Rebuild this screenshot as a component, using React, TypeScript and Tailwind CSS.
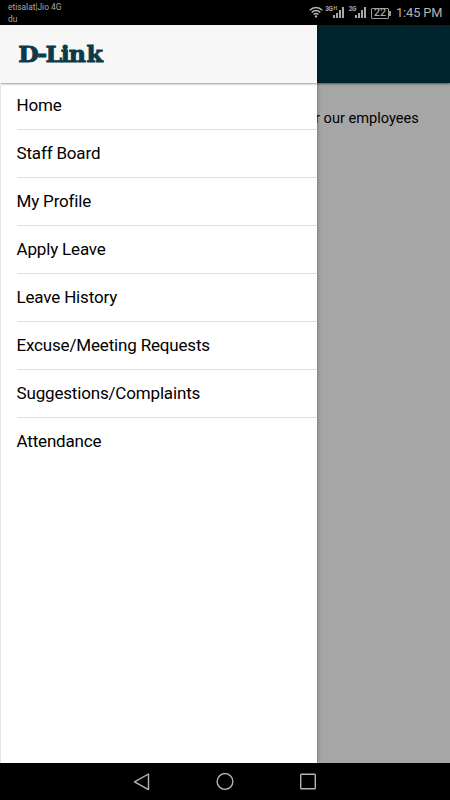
type MenuItem = {
  label: string;
  url: string;
};

const menuItems: MenuItem[] = [
  { label: "Home", url: "#" },
  { label: "Staff Board", url: "#" },
  { label: "My Profile", url: "#" },
  { label: "Apply Leave", url: "#" },
  { label: "Leave History", url: "#" },
  { label: "Excuse/Meeting Requests", url: "#" },
  { label: "Suggestions/Complaints", url: "#" },
  { label: "Attendance", url: "#" },
];

const WifiIcon = () => (
  <svg width="14" height="12" viewBox="0 0 14 12" fill="none" stroke="#b4b4b4" strokeWidth="1.4">
    <path d="M0.7 4.2C4.4 0.5 9.6 0.5 13.3 4.2" />
    <path d="M2.7 6.4C5.2 3.9 8.8 3.9 11.3 6.4" />
    <path d="M4.6 8.5C6 7.1 8 7.1 9.4 8.5" />
    <circle cx="7" cy="10.4" r="1.2" fill="#b4b4b4" stroke="none" />
  </svg>
);

const SignalIcon = ({ network, mode }: { network: string; mode?: string }) => (
  <div className="flex items-start">
    <span className="whitespace-nowrap text-[6.5px] font-bold leading-[6px] tracking-[-0.5px]">
      {network}
    </span>
    {mode && (
      <span className="ml-px text-[5px] font-bold leading-[5px]">{mode}</span>
    )}
    <svg
      className={mode ? "-ml-[4px] mt-px" : "-ml-px mt-px"}
      width="12"
      height="11"
      viewBox="0 0 12 11"
      fill="#a8a8a8"
    >
      <rect x="0" y="8" width="2" height="3" />
      <rect x="3" y="6" width="2" height="5" />
      <rect x="6" y="3" width="2" height="8" />
      <rect x="9" y="0" width="2" height="11" />
    </svg>
  </div>
);

const StatusBar = () => (
  <div className="flex h-[25px] shrink-0 justify-between bg-black pl-2 pr-[8px] text-[#a8a8a8]">
    <div className="pt-px text-[8.4px] leading-[12px]">
      <p>etisalat|Jio 4G</p>
      <p>du</p>
    </div>
    <div className="flex items-start">
      <div className="mr-[3px] mt-[6px]">
        <WifiIcon />
      </div>
      <div className="mr-[3px] mt-[6px] flex w-[19px] justify-end">
        <SignalIcon network="3G" mode="H" />
      </div>
      <div className="mr-[4px] mt-[6px] flex w-[19px] justify-end">
        <SignalIcon network="2G" />
      </div>
      <div className="mr-[5px] mt-[8px] flex items-center">
        <div className="flex h-[11px] w-[18px] items-center justify-center rounded-[1px] border border-[#9a9a9a] text-[10.5px] font-medium leading-none">
          22
        </div>
        <div className="h-[5px] w-[2px] bg-[#9a9a9a]" />
      </div>
      <span className="w-[46px] whitespace-nowrap text-[12.8px] leading-[26px] tracking-[-0.1px] text-[#b4b4b4]">
        1:45 PM
      </span>
    </div>
  </div>
);

const Logo = () => (
  <svg width="94" height="32" viewBox="0 0 94 32" aria-label="D-Link">
    <text
      x="0.2 18.8 26.6 41.4 49.2 66.6"
      y="24"
      transform="scale(1.03 1)"
      fill="#0c3a49"
      stroke="#0c3a49"
      strokeWidth="0.9"
      className="font-['DejaVu_Serif',serif] text-[23px] font-bold"
    >
      D-Link
    </text>
  </svg>
);

const Drawer = () => (
  <aside className="z-10 flex w-[317px] shrink-0 flex-col bg-white shadow-[0_0_4px_rgba(0,0,0,0.4)]">
    <header className="flex h-[58px] shrink-0 items-center bg-[#f7f7f7] pl-[18px] shadow-[0_1px_2px_rgba(0,0,0,0.4)]">
      <Logo />
    </header>
    <nav className="flex-1 border-l border-[#e4e4e4] pl-[15.5px]">
      {menuItems.map((item) => (
        <a
          key={item.label}
          href={item.url}
          className="flex h-12 items-center border-b border-[#dedede] pt-px text-[17px] tracking-[-0.17px] text-black first:h-[47px] first:pt-0 last:border-b-0 last:pt-0 last:pb-px"
        >
          {item.label}
        </a>
      ))}
    </nav>
  </aside>
);

const Page = () => (
  <main className="flex flex-1 flex-col bg-[#a6a6a6]">
    <div className="h-[58px] shrink-0 bg-[#00252e] shadow-[0_1px_2px_rgba(0,0,0,0.5)]" />
    <p className="-ml-[2px] mt-[25px] whitespace-nowrap text-[14.6px] leading-5 text-black">
      r our employees
    </p>
  </main>
);

const NavigationBar = () => (
  <div className="z-20 flex h-[37px] shrink-0 items-center justify-center gap-[65px] bg-black">
    <svg width="18" height="18" viewBox="0 0 18 18" fill="none" stroke="#b4b4b4" strokeWidth="1.4" strokeLinejoin="round">
      <path d="M1.5 8.8L15.5 1V16.6Z" />
    </svg>
    <svg width="18" height="18" viewBox="0 0 18 18" fill="none" stroke="#b4b4b4" strokeWidth="1.4">
      <circle cx="9" cy="8.5" r="7.9" />
    </svg>
    <svg width="18" height="18" viewBox="0 0 18 18" fill="none" stroke="#b4b4b4" strokeWidth="1.4">
      <rect x="1.7" y="1.2" width="14.6" height="14.6" rx="0.8" />
    </svg>
  </div>
);

export default function App() {
  return (
    <div className="flex h-[800px] w-[450px] flex-col overflow-hidden bg-black font-[Roboto,sans-serif]">
      <StatusBar />
      <div className="flex min-h-0 flex-1">
        <Drawer />
        <Page />
      </div>
      <NavigationBar />
    </div>
  );
}
